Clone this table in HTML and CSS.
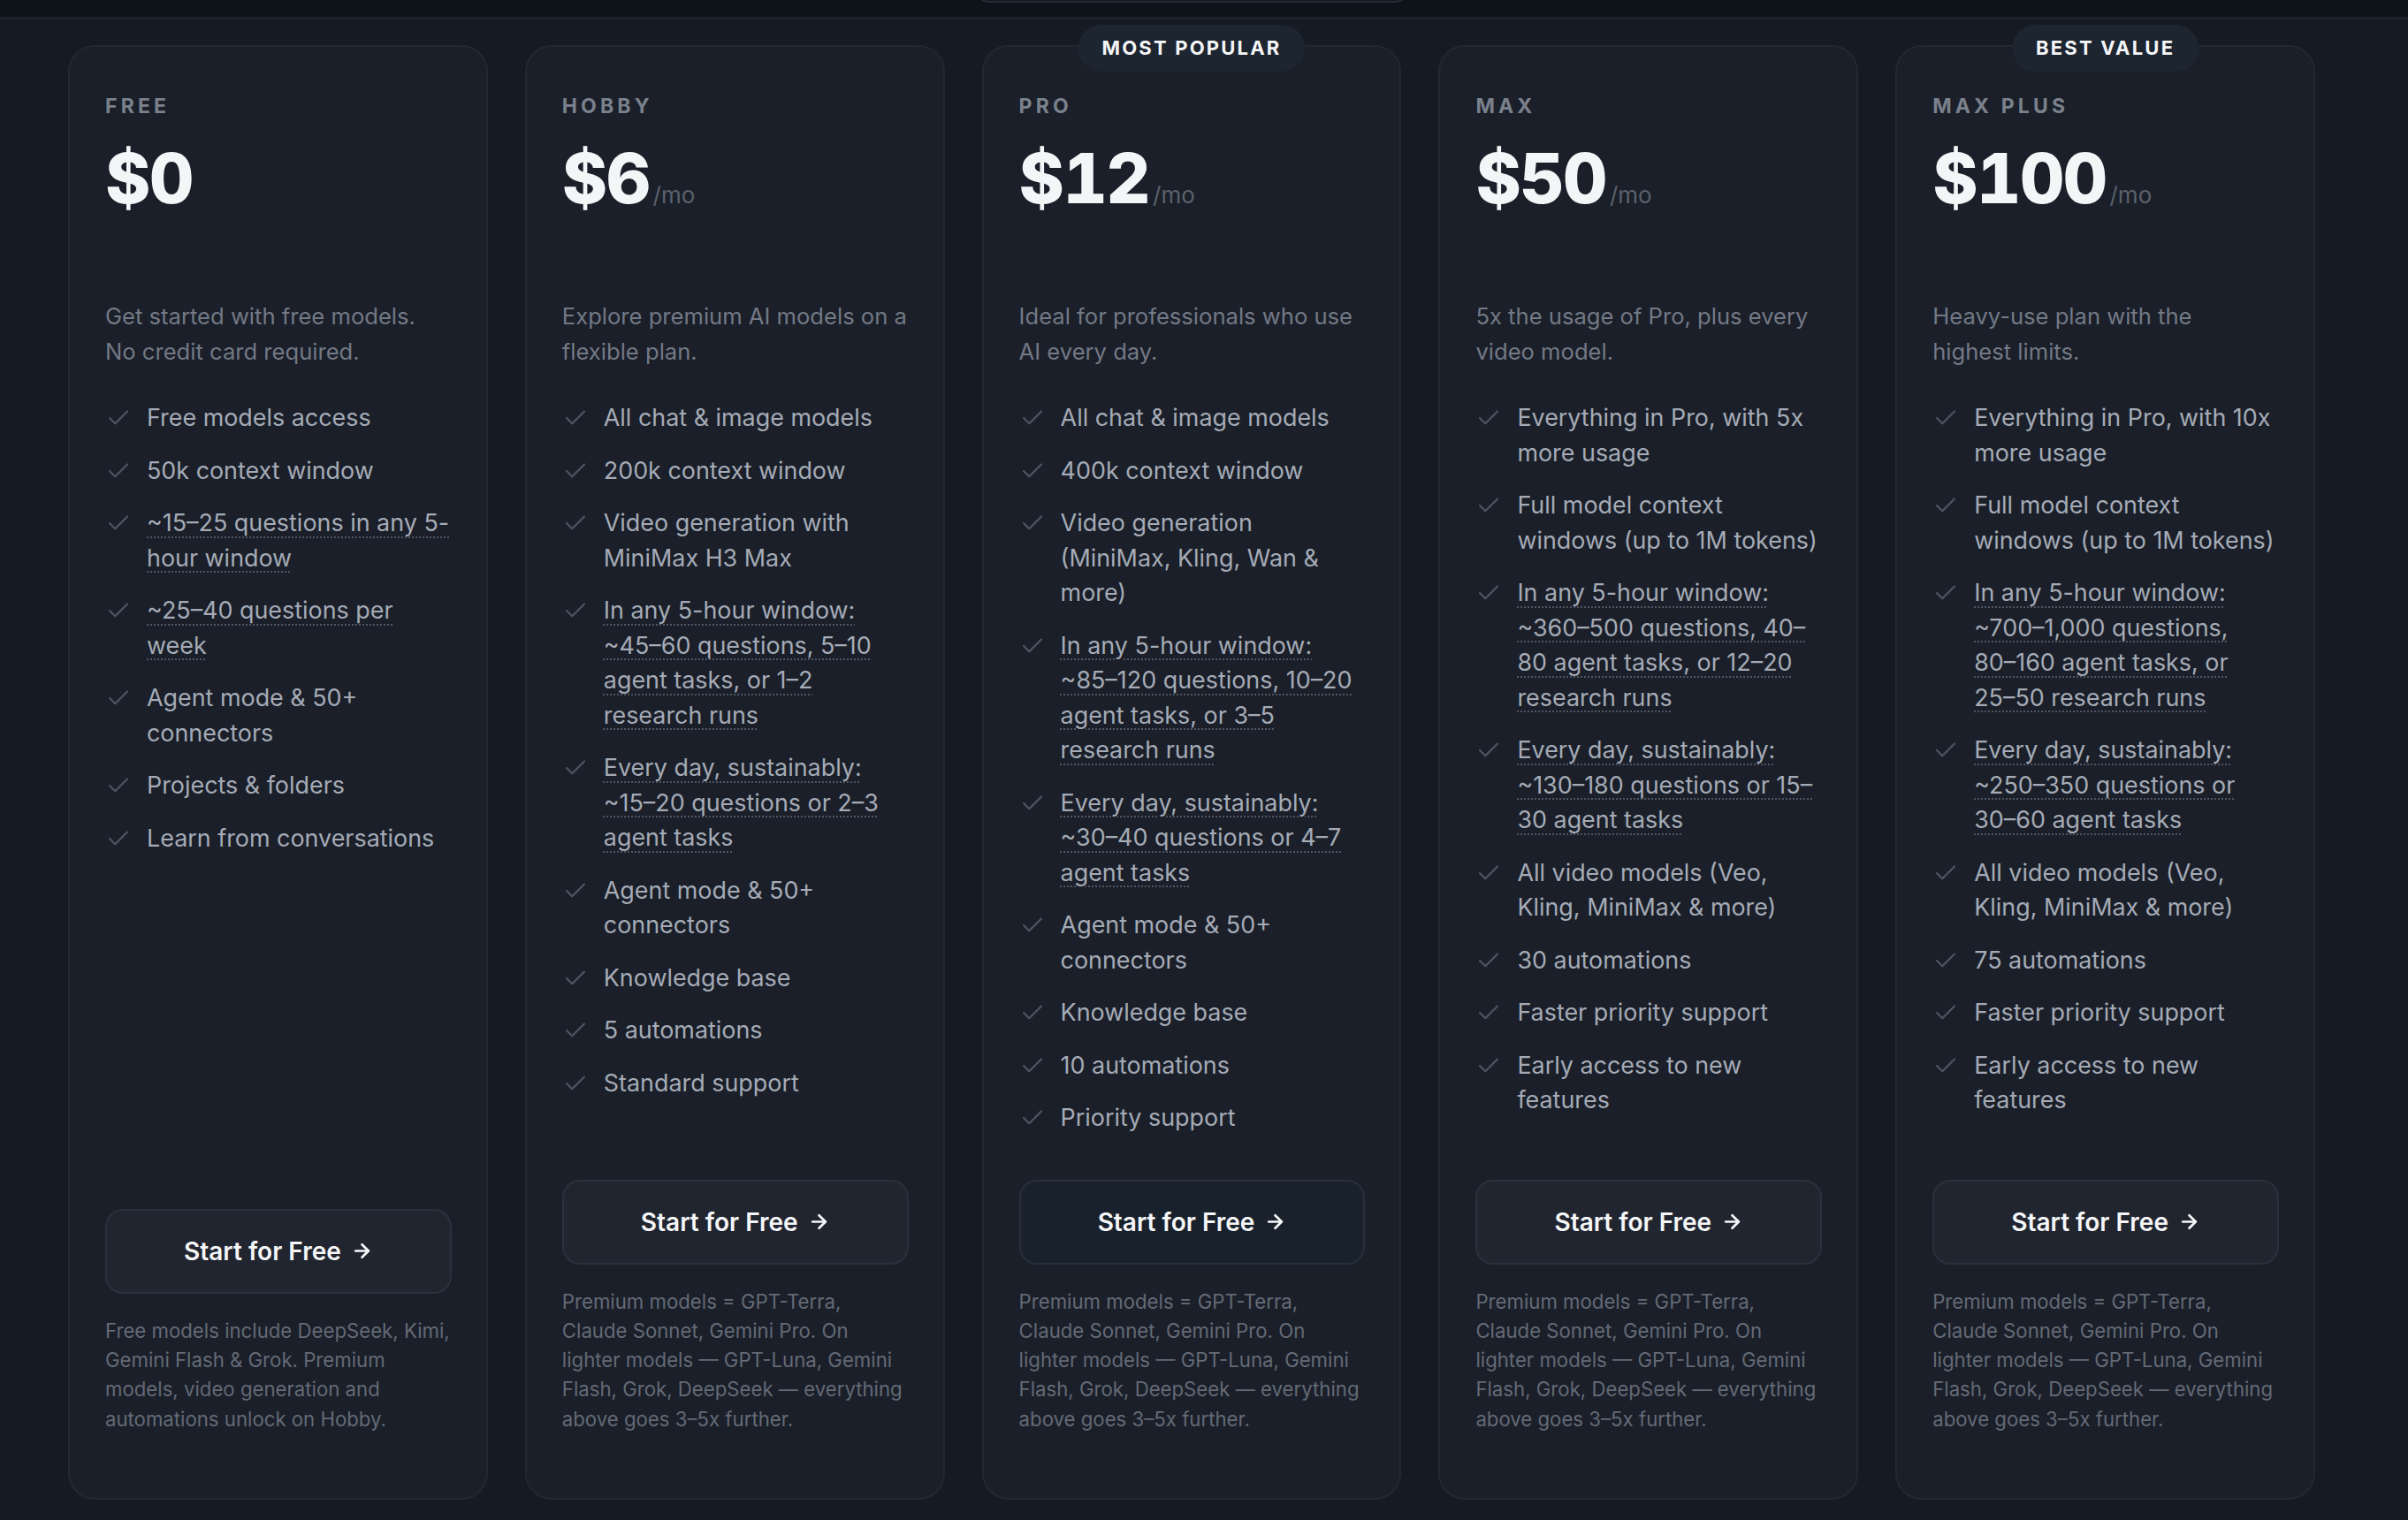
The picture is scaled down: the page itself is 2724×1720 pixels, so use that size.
FILE: index.html
```html
<!DOCTYPE html>
<html lang="en">
<head>
<meta charset="utf-8">
<title>Pricing</title>
<link rel="stylesheet" href="styles.css">
</head>
<body>
<header class="topbar">
  <div class="topbar-inner"><div class="toggle"></div></div>
</header>
<main class="plans">
  <section class="card">
    <div class="label">FREE</div>
    <div class="price"><span class="amount">$0</span></div>
    <p class="desc">Get started with free models. No credit card required.</p>
    <ul class="features">
      <li><svg class="check" viewBox="0 0 24 24"><polyline points="20 6 9 17 4 12"/></svg><span>Free models access</span></li>
      <li><svg class="check" viewBox="0 0 24 24"><polyline points="20 6 9 17 4 12"/></svg><span>50k context window</span></li>
      <li><svg class="check" viewBox="0 0 24 24"><polyline points="20 6 9 17 4 12"/></svg><span class="dotted">~15–25 questions in any 5-hour window</span></li>
      <li><svg class="check" viewBox="0 0 24 24"><polyline points="20 6 9 17 4 12"/></svg><span class="dotted">~25–40 questions per week</span></li>
      <li><svg class="check" viewBox="0 0 24 24"><polyline points="20 6 9 17 4 12"/></svg><span>Agent mode &amp; 50+ connectors</span></li>
      <li><svg class="check" viewBox="0 0 24 24"><polyline points="20 6 9 17 4 12"/></svg><span>Projects &amp; folders</span></li>
      <li><svg class="check" viewBox="0 0 24 24"><polyline points="20 6 9 17 4 12"/></svg><span>Learn from conversations</span></li>
    </ul>
    <div class="bottom">
      <a class="btn" href="#">Start for Free <svg class="arrow" viewBox="0 0 24 24"><path d="M5 12h14"/><path d="m12 5 7 7-7 7"/></svg></a>
      <p class="note">Free models include DeepSeek, Kimi, Gemini Flash &amp; Grok. Premium models, video generation and automations unlock on Hobby.</p>
    </div>
  </section>

  <section class="card">
    <div class="label">HOBBY</div>
    <div class="price"><span class="amount">$6</span><span class="per">/mo</span></div>
    <p class="desc">Explore premium AI models on a flexible plan.</p>
    <ul class="features">
      <li><svg class="check" viewBox="0 0 24 24"><polyline points="20 6 9 17 4 12"/></svg><span>All chat &amp; image models</span></li>
      <li><svg class="check" viewBox="0 0 24 24"><polyline points="20 6 9 17 4 12"/></svg><span>200k context window</span></li>
      <li><svg class="check" viewBox="0 0 24 24"><polyline points="20 6 9 17 4 12"/></svg><span>Video generation with MiniMax H3 Max</span></li>
      <li><svg class="check" viewBox="0 0 24 24"><polyline points="20 6 9 17 4 12"/></svg><span class="dotted">In any 5-hour window: ~45–60 questions, 5–10 agent tasks, or 1–2 research runs</span></li>
      <li><svg class="check" viewBox="0 0 24 24"><polyline points="20 6 9 17 4 12"/></svg><span class="dotted">Every day, sustainably: ~15–20 questions or 2–3 agent tasks</span></li>
      <li><svg class="check" viewBox="0 0 24 24"><polyline points="20 6 9 17 4 12"/></svg><span>Agent mode &amp; 50+ connectors</span></li>
      <li><svg class="check" viewBox="0 0 24 24"><polyline points="20 6 9 17 4 12"/></svg><span>Knowledge base</span></li>
      <li><svg class="check" viewBox="0 0 24 24"><polyline points="20 6 9 17 4 12"/></svg><span>5 automations</span></li>
      <li><svg class="check" viewBox="0 0 24 24"><polyline points="20 6 9 17 4 12"/></svg><span>Standard support</span></li>
    </ul>
    <div class="bottom">
      <a class="btn" href="#">Start for Free <svg class="arrow" viewBox="0 0 24 24"><path d="M5 12h14"/><path d="m12 5 7 7-7 7"/></svg></a>
      <p class="note">Premium models = GPT-Terra, Claude&nbsp;Sonnet, Gemini Pro. On lighter models — GPT-Luna, Gemini Flash, Grok, DeepSeek — everything above goes 3–5x further.</p>
    </div>
  </section>

  <section class="card featured">
    <div class="badge">MOST POPULAR</div>
    <div class="label">PRO</div>
    <div class="price"><span class="amount">$12</span><span class="per">/mo</span></div>
    <p class="desc">Ideal for professionals who use AI every day.</p>
    <ul class="features">
      <li><svg class="check" viewBox="0 0 24 24"><polyline points="20 6 9 17 4 12"/></svg><span>All chat &amp; image models</span></li>
      <li><svg class="check" viewBox="0 0 24 24"><polyline points="20 6 9 17 4 12"/></svg><span>400k context window</span></li>
      <li><svg class="check" viewBox="0 0 24 24"><polyline points="20 6 9 17 4 12"/></svg><span>Video generation (MiniMax, Kling, Wan &amp; more)</span></li>
      <li><svg class="check" viewBox="0 0 24 24"><polyline points="20 6 9 17 4 12"/></svg><span class="dotted">In any 5-hour window: ~85–120 questions, 10–20 agent tasks, or 3–5 research runs</span></li>
      <li><svg class="check" viewBox="0 0 24 24"><polyline points="20 6 9 17 4 12"/></svg><span class="dotted">Every day, sustainably: ~30–40 questions or 4–7 agent tasks</span></li>
      <li><svg class="check" viewBox="0 0 24 24"><polyline points="20 6 9 17 4 12"/></svg><span>Agent mode &amp; 50+ connectors</span></li>
      <li><svg class="check" viewBox="0 0 24 24"><polyline points="20 6 9 17 4 12"/></svg><span>Knowledge base</span></li>
      <li><svg class="check" viewBox="0 0 24 24"><polyline points="20 6 9 17 4 12"/></svg><span>10 automations</span></li>
      <li><svg class="check" viewBox="0 0 24 24"><polyline points="20 6 9 17 4 12"/></svg><span>Priority support</span></li>
    </ul>
    <div class="bottom">
      <a class="btn btn-featured" href="#">Start for Free <svg class="arrow" viewBox="0 0 24 24"><path d="M5 12h14"/><path d="m12 5 7 7-7 7"/></svg></a>
      <p class="note">Premium models = GPT-Terra, Claude&nbsp;Sonnet, Gemini Pro. On lighter models — GPT-Luna, Gemini Flash, Grok, DeepSeek — everything above goes 3–5x further.</p>
    </div>
  </section>

  <section class="card">
    <div class="label">MAX</div>
    <div class="price"><span class="amount">$50</span><span class="per">/mo</span></div>
    <p class="desc">5x the usage of Pro, plus every video model.</p>
    <ul class="features">
      <li><svg class="check" viewBox="0 0 24 24"><polyline points="20 6 9 17 4 12"/></svg><span>Everything in Pro, with 5x more usage</span></li>
      <li><svg class="check" viewBox="0 0 24 24"><polyline points="20 6 9 17 4 12"/></svg><span>Full model context windows (up to 1M tokens)</span></li>
      <li><svg class="check" viewBox="0 0 24 24"><polyline points="20 6 9 17 4 12"/></svg><span class="dotted">In any 5-hour window: ~360–500 questions, 40–80 agent tasks, or 12–20 research runs</span></li>
      <li><svg class="check" viewBox="0 0 24 24"><polyline points="20 6 9 17 4 12"/></svg><span class="dotted">Every day, sustainably: ~130–180 questions or 15–30 agent tasks</span></li>
      <li><svg class="check" viewBox="0 0 24 24"><polyline points="20 6 9 17 4 12"/></svg><span>All video models (Veo, Kling, MiniMax &amp; more)</span></li>
      <li><svg class="check" viewBox="0 0 24 24"><polyline points="20 6 9 17 4 12"/></svg><span>30 automations</span></li>
      <li><svg class="check" viewBox="0 0 24 24"><polyline points="20 6 9 17 4 12"/></svg><span>Faster priority support</span></li>
      <li><svg class="check" viewBox="0 0 24 24"><polyline points="20 6 9 17 4 12"/></svg><span>Early access to new features</span></li>
    </ul>
    <div class="bottom">
      <a class="btn" href="#">Start for Free <svg class="arrow" viewBox="0 0 24 24"><path d="M5 12h14"/><path d="m12 5 7 7-7 7"/></svg></a>
      <p class="note">Premium models = GPT-Terra, Claude&nbsp;Sonnet, Gemini Pro. On lighter models — GPT-Luna, Gemini Flash, Grok, DeepSeek — everything above goes 3–5x further.</p>
    </div>
  </section>

  <section class="card">
    <div class="badge">BEST VALUE</div>
    <div class="label">MAX PLUS</div>
    <div class="price"><span class="amount">$100</span><span class="per">/mo</span></div>
    <p class="desc">Heavy-use plan with the highest&nbsp;limits.</p>
    <ul class="features">
      <li><svg class="check" viewBox="0 0 24 24"><polyline points="20 6 9 17 4 12"/></svg><span>Everything in Pro, with 10x more usage</span></li>
      <li><svg class="check" viewBox="0 0 24 24"><polyline points="20 6 9 17 4 12"/></svg><span>Full model context windows (up to 1M tokens)</span></li>
      <li><svg class="check" viewBox="0 0 24 24"><polyline points="20 6 9 17 4 12"/></svg><span class="dotted">In any 5-hour window: ~700–1,000 questions, 80–&#8288;160 agent tasks, or 25–&#8288;50 research runs</span></li>
      <li><svg class="check" viewBox="0 0 24 24"><polyline points="20 6 9 17 4 12"/></svg><span class="dotted">Every day, sustainably: ~250–350 questions or 30–&#8288;60 agent tasks</span></li>
      <li><svg class="check" viewBox="0 0 24 24"><polyline points="20 6 9 17 4 12"/></svg><span>All video models (Veo, Kling, MiniMax &amp; more)</span></li>
      <li><svg class="check" viewBox="0 0 24 24"><polyline points="20 6 9 17 4 12"/></svg><span>75 automations</span></li>
      <li><svg class="check" viewBox="0 0 24 24"><polyline points="20 6 9 17 4 12"/></svg><span>Faster priority support</span></li>
      <li><svg class="check" viewBox="0 0 24 24"><polyline points="20 6 9 17 4 12"/></svg><span>Early access to new features</span></li>
    </ul>
    <div class="bottom">
      <a class="btn" href="#">Start for Free <svg class="arrow" viewBox="0 0 24 24"><path d="M5 12h14"/><path d="m12 5 7 7-7 7"/></svg></a>
      <p class="note">Premium models = GPT-Terra, Claude&nbsp;Sonnet, Gemini Pro. On lighter models — GPT-Luna, Gemini Flash, Grok, DeepSeek — everything above goes 3–5x further.</p>
    </div>
  </section>
</main>
</body>
</html>
```

FILE: styles.css
```css
* { box-sizing: border-box; }

html, body {
  margin: 0;
  padding: 0;
  background: #151a23;
  font-family: Inter, "Noto Sans", "Liberation Sans", sans-serif;
  -webkit-font-smoothing: antialiased;
}

.topbar {
  height: 22px;
  background: #0e1219;
  border-bottom: 3px solid #1c212b;
  overflow: hidden;
}

.topbar-inner {
  width: 2542px;
  margin-left: 77px;
  display: flex;
  justify-content: center;
}

.toggle {
  width: 495px;
  height: 40px;
  margin-top: -37px;
  border: 2px solid #262c37;
  border-radius: 18px;
  background: #141922;
}

.plans {
  width: 2542px;
  margin: 29px 0 0 77px;
  display: grid;
  grid-template-columns: repeat(5, 1fr);
  gap: 42px;
  padding-bottom: 20px;
}

.card {
  position: relative;
  display: flex;
  flex-direction: column;
  background: #1a1f29;
  border: 2px solid #232833;
  border-radius: 30px;
  padding: 50px 39px 73px 40px;
}

.badge {
  position: absolute;
  top: -25px;
  left: 50%;
  transform: translateX(-50%);
  padding: 0 27px;
  height: 53px;
  line-height: 53px;
  border-radius: 27px;
  background: #1d2530;
  color: #f5f6f8;
  font-size: 22px;
  font-weight: 700;
  letter-spacing: 0.1em;
  white-space: nowrap;
}

.label {
  font-size: 23px;
  line-height: 34px;
  font-weight: 700;
  letter-spacing: 0.18em;
  color: #7b818c;
}

.price {
  margin-top: 26px;
  display: flex;
  align-items: baseline;
  height: 78px;
}

.amount {
  font-size: 78px;
  line-height: 78px;
  font-weight: 800;
  letter-spacing: -0.02em;
  font-variant-numeric: tabular-nums;
  color: #f4f5f7;
}

.per {
  margin-left: 4px;
  font-size: 26px;
  color: #5b616c;
}

.desc {
  margin: 97px 0 0;
  font-size: 25.6px;
  line-height: 40px;
  color: #737985;
}

.features {
  list-style: none;
  margin: 35px 0 0;
  padding: 0;
  display: flex;
  flex-direction: column;
  gap: 20px;
}

.features li {
  display: flex;
  align-items: flex-start;
  gap: 17px;
  font-size: 26.9px;
  line-height: 39.5px;
  color: #a5abb6;
}

.check {
  flex: none;
  width: 30px;
  height: 30px;
  margin-top: 5px;
  fill: none;
  stroke: #4d5462;
  stroke-width: 1.8;
  stroke-linecap: round;
  stroke-linejoin: round;
}

.dotted {
  text-decoration: underline dotted #4f5562;
  text-decoration-thickness: 2px;
  text-underline-offset: 6px;
}

.bottom {
  margin-top: auto;
  padding-top: 50px;
}

.btn {
  display: flex;
  align-items: center;
  justify-content: center;
  gap: 11px;
  height: 96px;
  border: 2px solid #2b313c;
  border-radius: 20px;
  background: #21252f;
  color: #f5f6f8;
  font-size: 28px;
  font-weight: 600;
  text-decoration: none;
}

.btn-featured {
  background: #19212c;
  border-color: #27303c;
}

.arrow {
  width: 25px;
  height: 25px;
  fill: none;
  stroke: #f5f6f8;
  stroke-width: 2.6;
  stroke-linecap: round;
  stroke-linejoin: round;
}

.note {
  margin: 25px 0 0;
  font-size: 22.2px;
  line-height: 33.3px;
  color: #646a76;
}
```
